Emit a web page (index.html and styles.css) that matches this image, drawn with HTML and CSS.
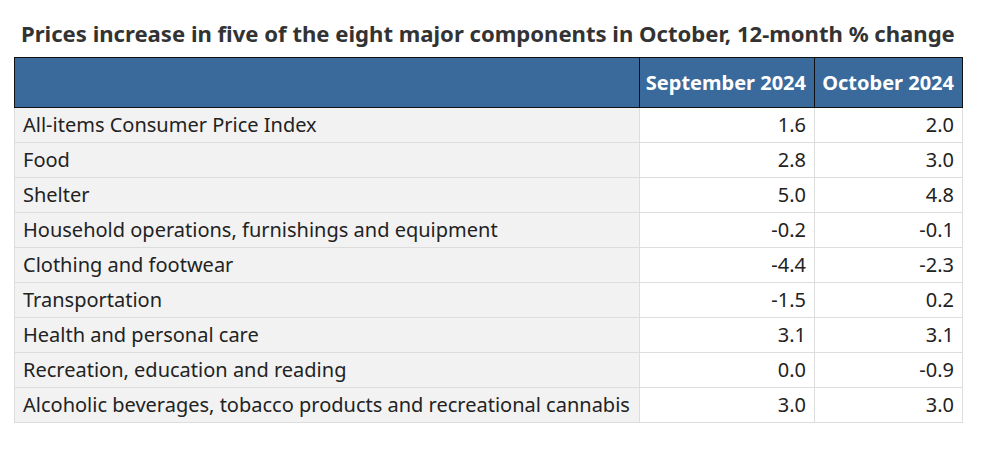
FILE: index.html
```html
<!DOCTYPE html>
<html>
<head>
<meta charset="utf-8">
<link rel="stylesheet" href="styles.css">
</head>
<body>
<div class="wrap">
  <h1 class="title">Prices increase in five of the eight major components in October, 12-month % change</h1>
  <table class="tbl">
    <colgroup>
      <col class="c-stub">
      <col class="c-sep">
      <col class="c-oct">
    </colgroup>
    <thead>
      <tr>
        <th class="stub"></th>
        <th class="num">September 2024</th>
        <th class="num">October 2024</th>
      </tr>
    </thead>
    <tbody>
      <tr><td class="stub">All-items Consumer Price Index</td><td class="num">1.6</td><td class="num">2.0</td></tr>
      <tr><td class="stub">Food</td><td class="num">2.8</td><td class="num">3.0</td></tr>
      <tr><td class="stub">Shelter</td><td class="num">5.0</td><td class="num">4.8</td></tr>
      <tr><td class="stub">Household operations, furnishings and equipment</td><td class="num">-0.2</td><td class="num">-0.1</td></tr>
      <tr><td class="stub">Clothing and footwear</td><td class="num">-4.4</td><td class="num">-2.3</td></tr>
      <tr><td class="stub">Transportation</td><td class="num">-1.5</td><td class="num">0.2</td></tr>
      <tr><td class="stub">Health and personal care</td><td class="num">3.1</td><td class="num">3.1</td></tr>
      <tr><td class="stub">Recreation, education and reading</td><td class="num">0.0</td><td class="num">-0.9</td></tr>
      <tr><td class="stub">Alcoholic beverages, tobacco products and recreational cannabis</td><td class="num">3.0</td><td class="num">3.0</td></tr>
    </tbody>
  </table>
</div>
</body>
</html>
```

FILE: styles.css
```css
html, body {
  margin: 0;
  padding: 0;
  background: #ffffff;
}
body {
  font-family: "Noto Sans", "Open Sans", sans-serif;
  color: #222;
}
.wrap {
  padding: 19px 0 0 14px;
  width: 948px;
}
.title {
  margin: 0 0 10px 7px;
  font-size: 22.1px;
  line-height: 28px;
  font-weight: 700;
  color: #333333;
  white-space: nowrap;
}
.tbl {
  border-collapse: collapse;
  table-layout: fixed;
  width: 948px;
  font-size: 20px;
}
.c-stub { width: 625px; }
.c-sep { width: 175px; }
.c-oct { width: 148px; }
.tbl th {
  background: #3a6a9c;
  color: #ffffff;
  font-weight: 700;
  height: 49px;
  border: 1px solid #111;
  padding: 0 8px 0 0;
  text-align: right;
  white-space: nowrap;
}
.tbl td {
  height: 34px;
  padding: 0 8px;
  border: 1px solid #dddddd;
  line-height: 24px;
  white-space: nowrap;
}
.tbl td.stub {
  background: #f2f2f2;
  text-align: left;
}
.tbl td.num {
  text-align: right;
  background: #ffffff;
}
```
